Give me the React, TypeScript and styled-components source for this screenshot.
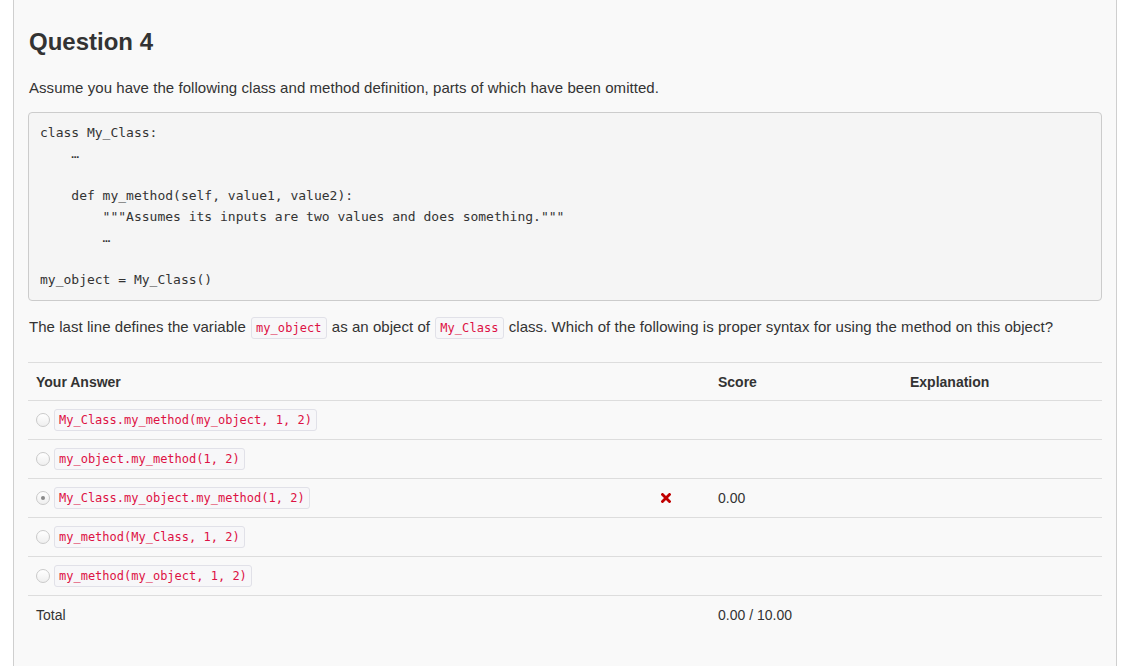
import React from "react";
import styled, { createGlobalStyle } from "styled-components";

const GlobalStyle = createGlobalStyle`
  html, body {
    margin: 0;
    padding: 0;
    background: #ffffff;
  }
  body {
    font-family: "Liberation Sans", Arial, sans-serif;
    color: #333333;
    font-size: 14px;
  }
  * {
    box-sizing: border-box;
  }
`;

const Page = styled.div`
  height: 666px;
  overflow: hidden;
  padding: 0 5px 0 13px;
`;

const Panel = styled.div`
  width: 1104px;
  height: 666px;
  background: #f9f9f9;
  border-left: 1px solid #cfcfcf;
  border-right: 1px solid #cfcfcf;
  padding: 28px 14px 0 14px;
  display: flex;
  flex-direction: column;
`;

const Heading = styled.h2`
  margin: 0 0 22px 1px;
  font-size: 24px;
  line-height: 28px;
  font-weight: 700;
  color: #333;
`;

const Text = styled.p<{ $gap: number }>`
  margin: 0 0 ${(p) => p.$gap}px 1px;
  font-size: 15px;
  line-height: 20px;
  letter-spacing: 0.05px;
`;

const CodeBlock = styled.pre`
  margin: 0 0 16px 0;
  padding: 9px 11px 10px;
  background: #f5f5f5;
  border: 1px solid #cccccc;
  border-radius: 4px;
  font-family: "DejaVu Sans Mono", "Liberation Mono", monospace;
  font-size: 13px;
  line-height: 21px;
  color: #333;
`;

const Code = styled.code`
  display: inline-block;
  font-family: "DejaVu Sans Mono", "Liberation Mono", monospace;
  font-size: 12px;
  line-height: 16px;
  color: #dd1144;
  background: #f7f7f9;
  border: 1px solid #e1e1e8;
  border-radius: 3px;
  padding: 2px 4px;
  vertical-align: 0;
`;

const InlineCode = styled(Code)`
  margin: 0 1px;
`;

const Table = styled.div`
  display: flex;
  flex-direction: column;
`;

const Row = styled.div<{ $height: number }>`
  display: grid;
  grid-template-columns: 682px 192px 1fr;
  align-items: center;
  height: ${(p) => p.$height}px;
  border-top: 1px solid #dddddd;
  font-size: 14px;
`;

const HeadRow = styled(Row)`
  font-weight: 700;
`;

const Cell = styled.div`
  padding: 0 8px;
  display: flex;
  align-items: center;
`;

const Radio = styled.span<{ $checked?: boolean }>`
  width: 14px;
  height: 14px;
  border-radius: 50%;
  border: 1px solid #cacaca;
  background: linear-gradient(#ffffff, #efefef);
  display: inline-flex;
  align-items: center;
  justify-content: center;
  margin-right: 4px;
  flex: none;

  &::after {
    content: "";
    width: 4px;
    height: 4px;
    border-radius: 50%;
    background: ${(p) => (p.$checked ? "#8a8a8a" : "transparent")};
  }
`;

const Mark = styled.span`
  margin-left: auto;
  margin-right: 31px;
  display: inline-flex;
`;

const Cross = () => (
  <svg width="10" height="10" viewBox="0 0 10 10">
    <path d="M1.5 1.5 L8.5 8.5 M8.5 1.5 L1.5 8.5" stroke="#c00000" strokeWidth="2.8" strokeLinecap="square" />
  </svg>
);

const answers = [
  { code: "My_Class.my_method(my_object, 1, 2)" },
  { code: "my_object.my_method(1, 2)" },
  { code: "My_Class.my_object.my_method(1, 2)", checked: true, score: "0.00" },
  { code: "my_method(My_Class, 1, 2)" },
  { code: "my_method(my_object, 1, 2)" },
];

const source = `class My_Class:
    …

    def my_method(self, value1, value2):
        """Assumes its inputs are two values and does something."""
        …

my_object = My_Class()`;

export default function App() {
  return (
    <Page>
      <GlobalStyle />
      <Panel>
        <Heading>Question 4</Heading>
        <Text $gap={14}>
          Assume you have the following class and method definition, parts of which have been omitted.
        </Text>
        <CodeBlock>{source}</CodeBlock>
        <Text $gap={23}>
          The last line defines the variable <InlineCode>my_object</InlineCode> as an object of{" "}
          <InlineCode>My_Class</InlineCode> class. Which of the following is proper syntax for using the method on
          this object?
        </Text>
        <Table>
          <HeadRow $height={38}>
            <Cell>Your Answer</Cell>
            <Cell>Score</Cell>
            <Cell>Explanation</Cell>
          </HeadRow>
          {answers.map((a) => (
            <Row $height={39} key={a.code}>
              <Cell>
                <Radio $checked={a.checked} />
                <Code>{a.code}</Code>
                {a.checked && (
                  <Mark>
                    <Cross />
                  </Mark>
                )}
              </Cell>
              <Cell>{a.score}</Cell>
              <Cell />
            </Row>
          ))}
          <Row $height={39}>
            <Cell>Total</Cell>
            <Cell>0.00 / 10.00</Cell>
            <Cell />
          </Row>
        </Table>
      </Panel>
    </Page>
  );
}
